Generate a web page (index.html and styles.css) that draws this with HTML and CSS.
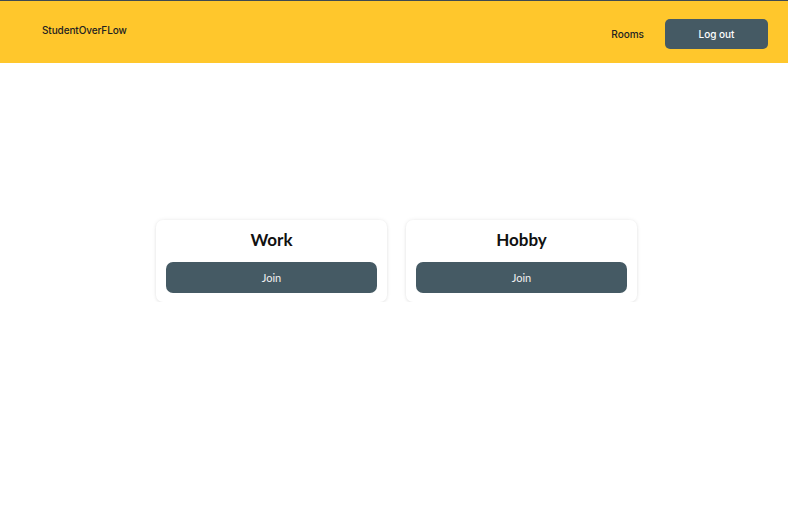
FILE: index.html
```html
<!DOCTYPE html>
<html>
<head>
<meta charset="utf-8">
<link rel="stylesheet" href="styles.css">
</head>
<body>
<header class="topbar">
  <div class="brand">StudentOverFLow</div>
  <nav class="nav">
    <a class="nav-link">Rooms</a>
    <button class="logout">Log out</button>
  </nav>
</header>
<main class="rooms">
  <div class="card">
    <h2 class="card-title">Work</h2>
    <button class="join">Join</button>
  </div>
  <div class="card">
    <h2 class="card-title">Hobby</h2>
    <button class="join">Join</button>
  </div>
</main>
</body>
</html>
```
FILE: styles.css
```css
* { box-sizing: border-box; }
html, body { margin: 0; padding: 0; background: #fff; }
body { font-family: Inter, "Open Sans", sans-serif; color: #1a1a1a; }
.topbar {
  border-top: 1px solid #3f4a52;
  background: #ffc72c;
  height: 63px;
  display: flex;
  align-items: center;
  justify-content: space-between;
  padding: 0 20px 0 42px;
}
.brand { font-size: 10px; font-weight: 500; color: #222; margin-top: -4px; letter-spacing: -0.1px; }
.nav { display: flex; align-items: center; gap: 21px; margin-top: 4px; }
.nav-link { font-size: 10px; font-weight: 500; color: #222; }
.logout {
  width: 103px; height: 30px; border: none; border-radius: 5px;
  background: #455a64; color: #fff; font-family: inherit; font-size: 10px; font-weight: 500;
}
.rooms {
  display: flex; justify-content: center; gap: 19px;
  padding-top: 157px; padding-left: 5px;
}
.card {
  width: 231px; padding: 10px 10px 9px;
  background: #fff; border-radius: 7px;
  box-shadow: 0 0 4px rgba(0,0,0,0.08), 0 1px 3px rgba(0,0,0,0.06);
  display: flex; flex-direction: column; align-items: stretch;
}
.card-title { margin: 0 0 12px; text-align: center; font-family: Lato, sans-serif; font-size: 17px; font-weight: 700; color: #111; line-height: 20px; }
.join {
  height: 31px; border: none; border-radius: 7px; background: #455a64;
  color: #f0f0f0; font-family: Lato, sans-serif; font-size: 11px;
}
```
